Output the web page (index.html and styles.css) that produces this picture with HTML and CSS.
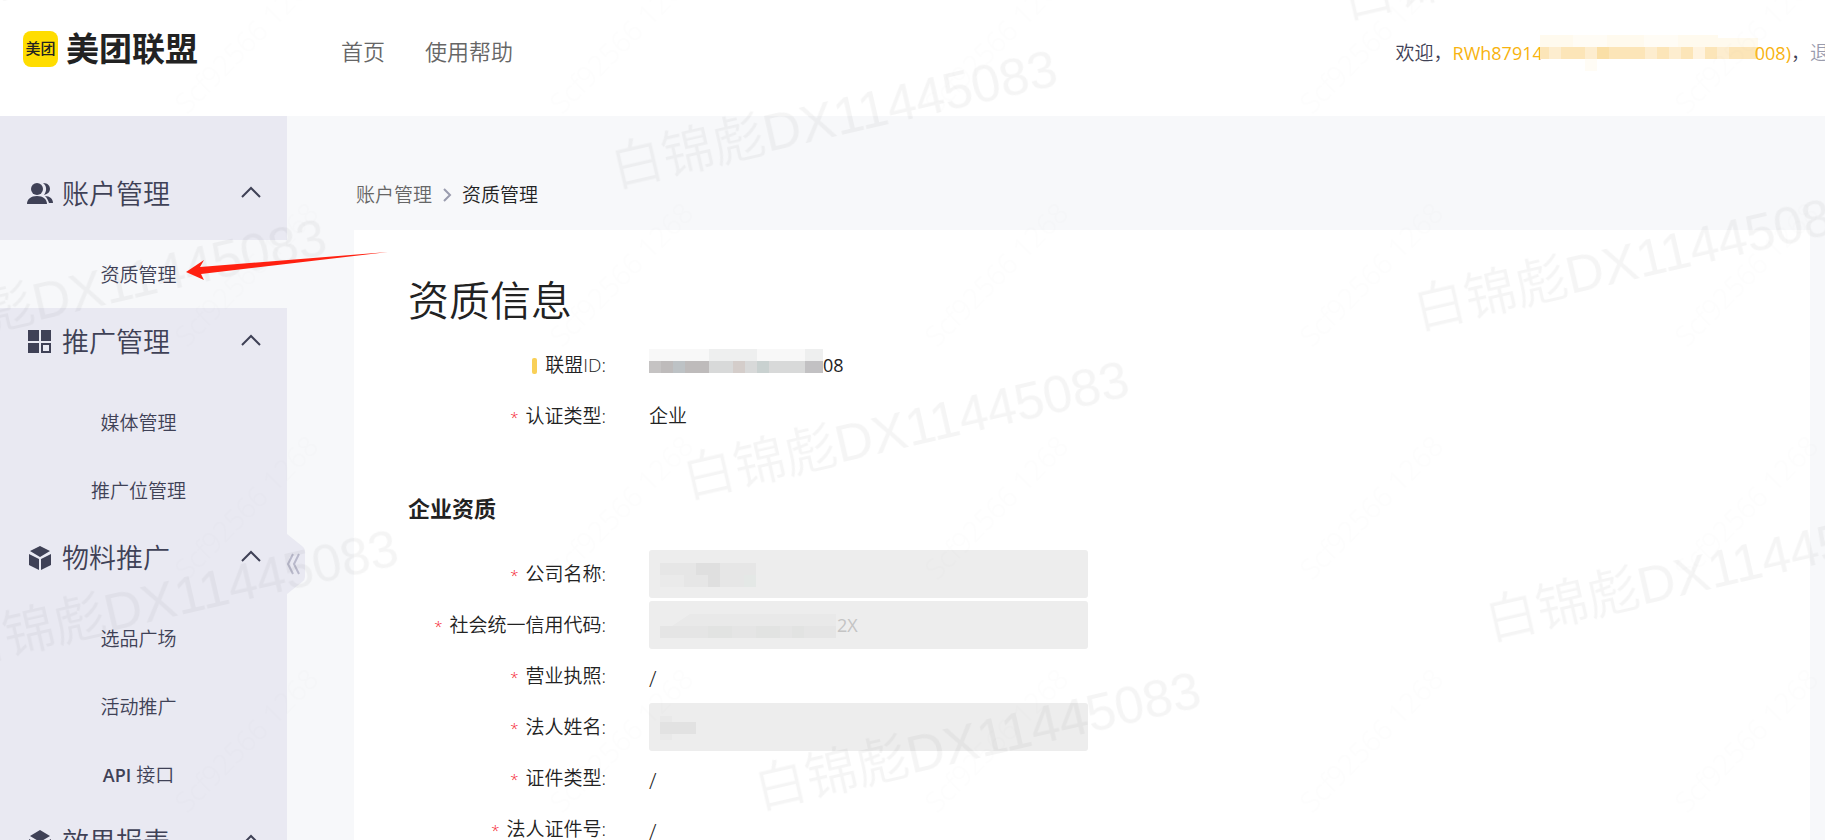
FILE: index.html
```
<!DOCTYPE html>
<html lang="zh-CN">
<head>
    <meta charset="UTF-8">
    <title>美团联盟 - 资质管理</title>
    <meta name="viewport" content="width=device-width, initial-scale=1.0">
    <link rel="stylesheet" href="styles.css">
</head>
<body>
    <header class="header">
        <a class="logo" href="#">
            <span class="logo-mark">美团</span>
            <span class="logo-name">美团联盟</span>
        </a>
        <nav class="top-nav">
            <a href="#">首页</a>
            <a href="#">使用帮助</a>
        </nav>
        <div class="user">
            <span>欢迎，</span>
            <span class="user-name">RWh87914</span>
            <svg class="user-mask" width="218" height="36" viewBox="0 0 218 36" aria-hidden="true">
                <path fill="#fffaee" d="M0 0h178v3h40v9H0z"/>
                <path fill="#fffcf5" d="M33 0h34v12H33zM104 0h34v12h-34zM45 24h12v12H45z"/>
                <path fill="#fce5b8" d="M0 12h218v12H0z"/>
                <path fill="#fdedcf" d="M9 12h12v12H9zM45 12h12v12H45zM105 12h12v12h-12zM129 12h12v12h-12zM177 12h12v12h-12z"/>
                <path fill="#fadfa6" d="M57 12h12v12H57z"/>
                <path fill="#fff3df" d="M153 12h12v12h-12z"/>
            </svg>
            <span class="user-name">008)</span>
            <span>，</span>
            <a class="logout" href="#">退出</a>
        </div>
    </header>

    <div class="layout">
        <aside class="sidebar">
            <button class="menu-title">
                <svg class="menu-icon" viewBox="0 0 28 24" aria-hidden="true">
                    <circle cx="11" cy="7" r="6"/>
                    <path d="M1 22c0-5 4-8 10-8s10 3 10 8zM17 1c5 0 7 3 7 6s-2 5-6 6c3-4 3-9-1-12zM19 14c5 0 8 3 8 7h-4c-1-3-2-5-4-7z"/>
                </svg>
                <span>账户管理</span>
                <svg class="arrow-up" viewBox="0 0 20 14" aria-hidden="true"><path d="M1 12l9-9 9 9"/></svg>
            </button>
            <a class="menu-item active" href="#">资质管理</a>

            <button class="menu-title">
                <svg class="menu-icon" viewBox="0 0 28 24" aria-hidden="true">
                    <path d="M2 0h11v11H2zM15 0h10v11H15zM2 13h11v10H2z"/>
                    <path fill-rule="evenodd" d="M15 13h10v10H15zM17 15v6h6v-6z"/>
                </svg>
                <span>推广管理</span>
                <svg class="arrow-up" viewBox="0 0 20 14" aria-hidden="true"><path d="M1 12l9-9 9 9"/></svg>
            </button>
            <a class="menu-item" href="#">媒体管理</a>
            <a class="menu-item" href="#">推广位管理</a>

            <button class="menu-title">
                <svg class="menu-icon" viewBox="0 0 28 24" aria-hidden="true">
                    <path d="M14 0l10 5-10 6L4 5zM3 8l10 5v11L3 19zM25 8v11l-10 5V13z"/>
                </svg>
                <span>物料推广</span>
                <svg class="arrow-up" viewBox="0 0 20 14" aria-hidden="true"><path d="M1 12l9-9 9 9"/></svg>
            </button>
            <a class="menu-item" href="#">选品广场</a>
            <a class="menu-item" href="#">活动推广</a>
            <a class="menu-item" href="#"><b>API</b> 接口</a>

            <button class="menu-title">
                <svg class="menu-icon" viewBox="0 0 28 24" aria-hidden="true">
                    <path d="M14 0l10 6-10 6L4 6zM3 9l11 6 11-6v3l-11 6-11-6zM3 15l11 6 11-6v3l-11 6-11-6z"/>
                </svg>
                <span>效果报表</span>
                <svg class="arrow-up" viewBox="0 0 20 14" aria-hidden="true"><path d="M1 12l9-9 9 9"/></svg>
            </button>

            <button class="collapse" aria-label="收起菜单">
                <svg width="18" height="60" viewBox="0 0 18 60" aria-hidden="true">
                    <path class="collapse-bg" d="M0 0l15 12q3 2 3 5v26q0 3-3 5L0 60z"/>
                    <path class="collapse-arrow" d="M6 20L1 30l5 10M12 20L7 30l5 10"/>
                </svg>
            </button>
        </aside>

        <main class="main">
            <nav class="breadcrumb">
                <a href="#">账户管理</a>
                <svg width="10" height="14" viewBox="0 0 10 14" aria-hidden="true"><path d="M2 1l6 6-6 6"/></svg>
                <span>资质管理</span>
            </nav>

            <section class="card">
                <h1>资质信息</h1>
                <div class="row">
                    <span class="label"><i class="bar"></i>联盟ID:</span>
                    <span class="value masked">
                        <svg width="174" height="24" viewBox="0 0 174 24" aria-hidden="true">
                            <path fill="#f8f8f8" d="M0 0h174v12H0z"/>
                            <path fill="#eeefef" d="M60 0h48v12H60zM156 0h18v12h-18z"/>
                            <path fill="#c5c3c3" d="M0 12h60v12H0z"/>
                            <path fill="#bebbbb" d="M12 12h12v12H12zM36 12h24v12H36z"/>
                            <path fill="#bdc2c5" d="M24 12h12v12H24z"/>
                            <path fill="#d8d9d9" d="M60 12h96v12H60z"/>
                            <path fill="#d4cdca" d="M84 12h12v12H84z"/>
                            <path fill="#c9d1d0" d="M108 12h12v12h-12z"/>
                            <path fill="#c2c1c3" d="M156 12h18v12h-18z"/>
                        </svg>08
                    </span>
                </div>
                <div class="row">
                    <span class="label required">认证类型:</span>
                    <span class="value">企业</span>
                </div>

                <h2>企业资质</h2>
                <div class="row">
                    <label class="label required" for="company">公司名称:</label>
                    <span class="field">
                        <input id="company" type="text" disabled>
                        <svg class="mask" width="96" height="24" viewBox="0 0 96 24" aria-hidden="true">
                            <path fill="#e6e6e6" d="M0 0h96v24H0z"/>
                            <path fill="#eaeaea" d="M0 12h24v12H0z"/>
                            <path fill="#dfdfdf" d="M36 0h24v12H36zM48 12h12v12H48z"/>
                            <path fill="#e4e8e6" d="M84 12h12v12H84z"/>
                        </svg>
                    </span>
                </div>
                <div class="row">
                    <label class="label required" for="credit-code">社会统一信用代码:</label>
                    <span class="field">
                        <input id="credit-code" class="credit-code" type="text" value="2X" disabled>
                        <svg class="mask" width="176" height="24" viewBox="0 0 176 24" aria-hidden="true">
                            <path fill="#e9e9e9" d="M30 0h146v12H12z"/>
                            <path fill="#e5e5e5" d="M0 12h176v12H0z"/>
                            <path fill="#e2e3e2" d="M48 12h24v12H48zM96 12h24v12H96zM132 12h12v12h-12z"/>
                        </svg>
                    </span>
                </div>
                <div class="row">
                    <span class="label required">营业执照:</span>
                    <span class="value slash">/</span>
                </div>
                <div class="row">
                    <label class="label required" for="legal-person">法人姓名:</label>
                    <span class="field">
                        <input id="legal-person" type="text" disabled>
                        <svg class="mask" width="36" height="24" viewBox="0 0 36 24" aria-hidden="true">
                            <path fill="#e9e9e9" d="M0 0h12v24H0z"/>
                            <path fill="#e2e2e2" d="M0 6h36v12H0z"/>
                        </svg>
                    </span>
                </div>
                <div class="row">
                    <span class="label required">证件类型:</span>
                    <span class="value slash">/</span>
                </div>
                <div class="row">
                    <span class="label required">法人证件号:</span>
                    <span class="value slash">/</span>
                </div>
            </section>
        </main>
    </div>

    <!-- watermark layers -->
    <svg class="watermark" aria-hidden="true">
        <defs>
            <pattern id="wm-name" x="-10" y="-70" width="750" height="319" patternUnits="userSpaceOnUse" patternTransform="translate(616 187) rotate(-13)">
                <text class="wm-name" x="10" y="70">白锦彪DX11445083</text>
            </pattern>
            <pattern id="wm-code" x="-20" y="-200" width="375" height="233" patternUnits="userSpaceOnUse" patternTransform="translate(187 348)">
                <text class="wm-code" transform="translate(20 200) rotate(-45)">Scf92566 1268</text>
            </pattern>
        </defs>
        <rect width="100%" height="100%" fill="url(#wm-code)"/>
        <rect width="100%" height="100%" fill="url(#wm-name)"/>
    </svg>

    <!-- pointer to the current menu item -->
    <svg class="pointer" width="204" height="30" viewBox="0 0 204 30" aria-hidden="true">
        <path d="M0 20L18 8l-4 7L202 0 15 22l3 6z"/>
    </svg>
</body>
</html>
```
FILE: styles.css
```
:root {
    --sidebar-bg: #e9e9f2;
    --page-bg: #f7f8fa;
    --menu-color: #3f4156;
    --text-color: #222;
    --brand: #ffdd00;
}

* {
    box-sizing: border-box;
}

body {
    margin: 0;
    height: 100vh;
    display: flex;
    flex-direction: column;
    overflow: hidden;
    position: relative;
    font-family: "Open Sans", "Noto Sans CJK SC", sans-serif;
    font-size: 19px;
    font-weight: 350;
    line-height: 28px;
    color: var(--text-color);
    background-color: var(--page-bg);
}

a {
    color: inherit;
    text-decoration: none;
}

button {
    padding: 0;
    border: none;
    background: none;
    font: inherit;
    color: inherit;
    cursor: pointer;
}

/* header */
.header {
    display: flex;
    align-items: center;
    flex-shrink: 0;
    height: 116px;
    padding: 0 0 14px 23px;
    overflow: hidden;
    white-space: nowrap;
    background-color: #fff;
}

.logo {
    display: flex;
    align-items: center;
    gap: 8px;
    margin-bottom: 4px;
    font-family: "Noto Sans CJK SC", sans-serif;
}

.logo-mark {
    width: 35px;
    height: 36px;
    border-radius: 8px;
    background-color: var(--brand);
    font-size: 15px;
    font-weight: 500;
    line-height: 34px;
    text-align: center;
}

.logo-name {
    padding-bottom: 4px;
    font-size: 33px;
    font-weight: 700;
    line-height: 32px;
}

.top-nav {
    display: flex;
    gap: 40px;
    margin-left: 143px;
    font-size: 22px;
    color: #666;
}

.user {
    display: flex;
    align-items: center;
    margin: 4px -23px 0 auto;
    color: var(--menu-color);
}

.user-name {
    font-size: 18px;
    font-weight: 400;
    color: #f8b30f;
}

.user-mask {
    margin: 0 -3px;
}

.logout {
    color: #9a9cae;
}

/* layout */
.layout {
    display: flex;
    flex: 1;
    min-height: 0;
}

.sidebar {
    position: relative;
    display: flex;
    flex-direction: column;
    flex-shrink: 0;
    width: 287px;
    padding-top: 44px;
    background-color: var(--sidebar-bg);
    color: var(--menu-color);
}

.menu-title {
    display: flex;
    align-items: center;
    flex-shrink: 0;
    height: 80px;
    padding: 0 26px 12px;
    font-size: 27px;
}

.menu-icon {
    width: 28px;
    height: 24px;
    margin-right: 8px;
    fill: var(--menu-color);
}

.arrow-up {
    width: 20px;
    height: 14px;
    margin: 0 0 4px auto;
    fill: none;
    stroke: var(--menu-color);
    stroke-width: 2;
}

.menu-item {
    flex-shrink: 0;
    height: 68px;
    padding-right: 10px;
    line-height: 70px;
    text-align: center;
}

.menu-item b {
    font-size: 18px;
    font-weight: 600;
}

.menu-item.active {
    background-color: var(--page-bg);
}

.collapse {
    position: absolute;
    top: 418px;
    left: 100%;
    height: 60px;
}

.collapse svg {
    display: block;
}

.collapse-bg {
    fill: var(--sidebar-bg);
}

.collapse-arrow {
    fill: none;
    stroke: #b9b9cb;
    stroke-width: 2;
}

/* content */
.main {
    display: flex;
    flex-direction: column;
    flex: 1;
    padding: 65px 15px 0 67px;
}

.breadcrumb {
    display: flex;
    align-items: center;
    gap: 10px;
    padding-left: 2px;
    margin-bottom: 21px;
}

.breadcrumb a {
    color: #666;
}

.breadcrumb svg {
    fill: none;
    stroke: #9a9cae;
    stroke-width: 2;
}

.card {
    flex: 1;
    padding: 40px 54px;
    background-color: #fff;
}

h1 {
    margin: 0 0 11px;
    font-size: 41px;
    font-weight: 350;
    line-height: 60px;
}

h2 {
    margin: 52px 0 26px;
    font-size: 22px;
    font-weight: 700;
    line-height: 32px;
}

.row {
    display: flex;
    align-items: center;
    height: 48px;
    margin-bottom: 3px;
}

.label {
    width: 198px;
    margin-right: 43px;
    text-align: right;
    white-space: nowrap;
}

.required::before {
    content: "*";
    margin-right: 7px;
    font-size: 15px;
    color: #f5222d;
}

.bar {
    display: inline-block;
    width: 5px;
    height: 16px;
    margin-right: 8px;
    border-radius: 2px;
    background-color: #f9d057;
    vertical-align: -2px;
}

.slash {
    padding-top: 3px;
    font-size: 22px;
}

.masked {
    display: flex;
    align-items: center;
    font-size: 18px;
    font-weight: 400;
}

.masked svg {
    margin-bottom: 8px;
}

.field {
    position: relative;
    width: 439px;
}

.field input {
    display: block;
    width: 100%;
    height: 48px;
    padding: 0 12px;
    border: none;
    border-radius: 3px;
    background-color: #ededed;
    font: inherit;
    color: #c4c4c4;
}

.field .credit-code {
    padding-left: 188px;
    font-size: 18px;
    font-weight: 400;
}

/* sits over the hidden part of the value */
.mask {
    position: absolute;
    top: 13px;
    left: 11px;
}

/* overlays */
.watermark {
    position: absolute;
    inset: 0;
    width: 100%;
    height: 100%;
    pointer-events: none;
}

.wm-name {
    font-family: "Liberation Sans", "Noto Sans CJK SC", sans-serif;
    font-size: 52px;
    font-weight: 350;
    fill: rgba(0, 0, 0, 0.04);
}

.wm-code {
    font-family: "Open Sans", sans-serif;
    font-size: 28px;
    font-weight: 300;
    fill: rgba(0, 0, 0, 0.006);
}

.pointer {
    position: absolute;
    top: 252px;
    left: 186px;
    fill: #ff2010;
    pointer-events: none;
}
```
